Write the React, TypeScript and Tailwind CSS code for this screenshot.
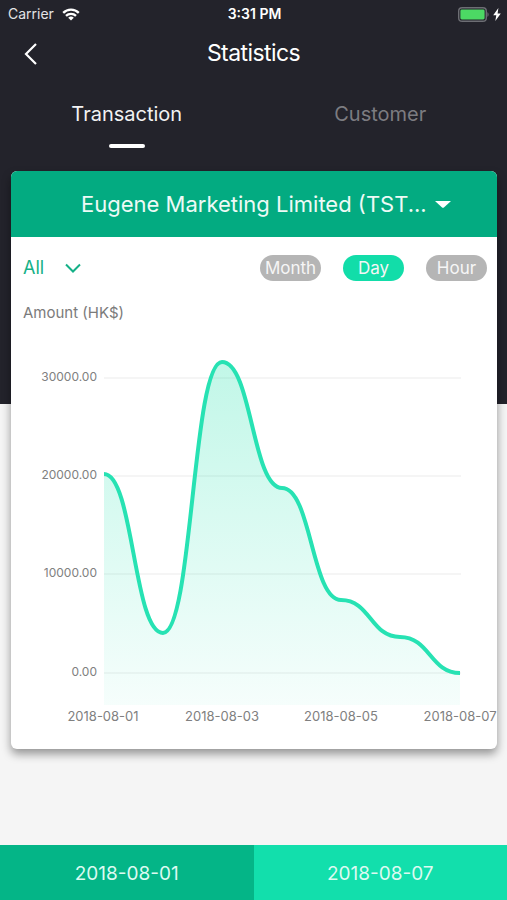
import { useState } from "react";

const points: [number, number][] = [
  [93, 151],
  [152, 310],
  [211, 39],
  [271, 165],
  [330, 277],
  [389, 314],
  [449, 350],
];

const yTicks = [
  { y: 54, label: "30000.00" },
  { y: 152, label: "20000.00" },
  { y: 250, label: "10000.00" },
  { y: 349, label: "0.00" },
];

const xTicks = [
  { x: 92, label: "2018-08-01" },
  { x: 211, label: "2018-08-03" },
  { x: 330, label: "2018-08-05" },
  { x: 449, label: "2018-08-07" },
];

const BASELINE = 382;

// Cubic segments whose tangents are horizontal at every data point
function curve(pts: [number, number][]) {
  return pts.reduce((d, [x, y], i) => {
    if (i === 0) return `M${x} ${y}`;
    const [px, py] = pts[i - 1];
    const mx = (px + x) / 2;
    return `${d} C${mx} ${py} ${mx} ${y} ${x} ${y}`;
  }, "");
}

function StatusBar() {
  return (
    <div className="grid grid-cols-3 items-center pt-1 pr-1.5 pl-2 text-sm leading-5 text-white">
      <div className="flex items-center gap-2">
        <span className="text-[#e4e4e6]">Carrier</span>
        <svg width="18" height="13" viewBox="0 0 18 13" fill="none" stroke="white" strokeWidth="2.3" aria-hidden="true">
          <path d="M1.2 4.9a11 11 0 0 1 15.6 0" />
          <path d="M4 7.9a7 7 0 0 1 10 0" />
          <path d="M9 12.6 6.2 9.8a4 4 0 0 1 5.6 0Z" fill="white" stroke="none" />
        </svg>
      </div>
      <span className="text-center font-semibold">3:31 PM</span>
      <div className="flex items-center justify-end gap-1">
        <svg width="31" height="15" viewBox="0 0 31 15" aria-hidden="true">
          <rect x="0.7" y="0.7" width="27.6" height="13.6" rx="3.4" fill="none" stroke="#6d6e74" strokeWidth="1.4" />
          <rect x="2.4" y="2.6" width="24.2" height="9.8" rx="1.4" fill="#4cd964" />
          <path d="M29.4 5.2c1.6.6 1.6 4 0 4.6Z" fill="#6d6e74" />
        </svg>
        <svg width="8" height="13" viewBox="0 0 8 13" fill="white" aria-hidden="true">
          <path d="M5.4 0 .2 7.2h3.1L2.3 13l5.5-7.6H4.6Z" />
        </svg>
      </div>
    </div>
  );
}

function TabButton({ label, active, onClick }: { label: string; active: boolean; onClick: () => void }) {
  return (
    <button
      type="button"
      role="tab"
      aria-selected={active}
      onClick={onClick}
      className={`flex flex-1 flex-col items-center gap-4 text-xl leading-7 ${active ? "text-[#f2f2f3]" : "text-[#7c7c81]"}`}
    >
      {label}
      <span className={`h-1 w-9 rounded-full ${active ? "bg-white" : "bg-transparent"}`} />
    </button>
  );
}

function Chart() {
  const line = curve(points);
  return (
    <svg viewBox="0 0 486 426" className="block w-full" role="img" aria-label="Transaction amount by day">
      <defs>
        <linearGradient id="area" x1="0" y1="39" x2="0" y2={BASELINE} gradientUnits="userSpaceOnUse">
          <stop offset="0" stopColor="#12e0a5" stopOpacity="0.26" />
          <stop offset="1" stopColor="#12e0ad" stopOpacity="0.04" />
        </linearGradient>
      </defs>
      {yTicks.map((t) => (
        <g key={t.label}>
          <rect x="93" y={t.y} width="357" height="2" fill="#f5f5f5" />
          <text x="86" y={t.y + 4} textAnchor="end" className="fill-[#808080] text-xs">
            {t.label}
          </text>
        </g>
      ))}
      <path d={`${line} V${BASELINE} H93 Z`} fill="url(#area)" />
      <path d={line} fill="none" stroke="#27e2b3" strokeWidth="4" />
      {xTicks.map((t) => (
        <text key={t.label} x={t.x} y="398" textAnchor="middle" className="fill-[#808080] text-[13px]">
          {t.label}
        </text>
      ))}
    </svg>
  );
}

export default function App() {
  const [tab, setTab] = useState("Transaction");
  const [period, setPeriod] = useState("Day");

  return (
    <div className="flex min-h-screen flex-col bg-[#f5f5f5] font-[Inter,'Liberation_Sans',sans-serif]">
      <header className="bg-[#23232b] pb-64">
        <StatusBar />
        <div className="grid grid-cols-[1fr_auto_1fr] items-center px-5 pt-[11px]">
          <button type="button" aria-label="Back" className="flex h-9 w-6 items-center">
            <svg width="20" height="24" viewBox="0 0 20 24" fill="none" stroke="white" strokeWidth="2.2" aria-hidden="true">
              <path d="M16 3 6 13l10 10" />
            </svg>
          </button>
          <h1 className="text-[23px] leading-8 tracking-tight text-white">Statistics</h1>
        </div>
        <div role="tablist" className="flex pt-[29px]">
          <TabButton label="Transaction" active={tab === "Transaction"} onClick={() => setTab("Transaction")} />
          <TabButton label="Customer" active={tab === "Customer"} onClick={() => setTab("Customer")} />
        </div>
      </header>

      <main className="-mt-[233px] pr-[10px] pb-6 pl-[11px]">
        <section className="overflow-hidden rounded-md bg-white shadow-[0_5px_10px_rgba(0,0,0,0.4)]">
          <div className="grid grid-cols-[1fr_auto_1fr] items-center gap-2 bg-[#03ab81] py-4 text-white">
            <select
              aria-label="Merchant"
              className="col-start-2 h-[34px] appearance-none bg-transparent text-[22px] leading-8 text-[#eefaf6]"
            >
              <option>Eugene Marketing Limited (TST...</option>
            </select>
            <svg width="16" height="7" viewBox="0 0 16 7" fill="white" aria-hidden="true">
              <path d="M0 0h16L9.2 6.2a1.8 1.8 0 0 1-2.4 0Z" />
            </svg>
          </div>

          <div className="flex items-center justify-between pt-[18px] pr-[10px] pl-3">
            <div className="flex items-center gap-5">
              <select aria-label="Transaction type" className="h-6 appearance-none bg-transparent text-lg leading-6 text-[#14b087]">
                <option>All</option>
              </select>
              <svg width="16" height="10" viewBox="0 0 16 10" fill="none" stroke="#14b087" strokeWidth="2" aria-hidden="true">
                <path d="m1 1.5 7 7 7-7" />
              </svg>
            </div>
            <div className="flex gap-[22px]">
              {["Month", "Day", "Hour"].map((p) => (
                <button
                  key={p}
                  type="button"
                  aria-pressed={period === p}
                  onClick={() => setPeriod(p)}
                  className={`h-[26px] w-[61px] rounded-full text-[17px] leading-6 text-[#f6f6f6] ${period === p ? "bg-[#12dda9]" : "bg-[#b5b5b5]"}`}
                >
                  {p}
                </button>
              ))}
            </div>
          </div>

          <h2 className="pt-[22px] pl-3 text-[15px] leading-5 text-[#7b7b7b]">Amount (HK$)</h2>
          <Chart />
        </section>
      </main>

      <footer className="mt-auto grid h-[55px] grid-cols-2 text-[19px] text-[#dcfaf1]">
        <button type="button" aria-label="Start date 2018-08-01" className="bg-[#04b587] pt-[3px]">
          2018-08-01
        </button>
        <button type="button" aria-label="End date 2018-08-07" className="bg-[#12dfac] pt-[3px]">
          2018-08-07
        </button>
      </footer>
    </div>
  );
}
